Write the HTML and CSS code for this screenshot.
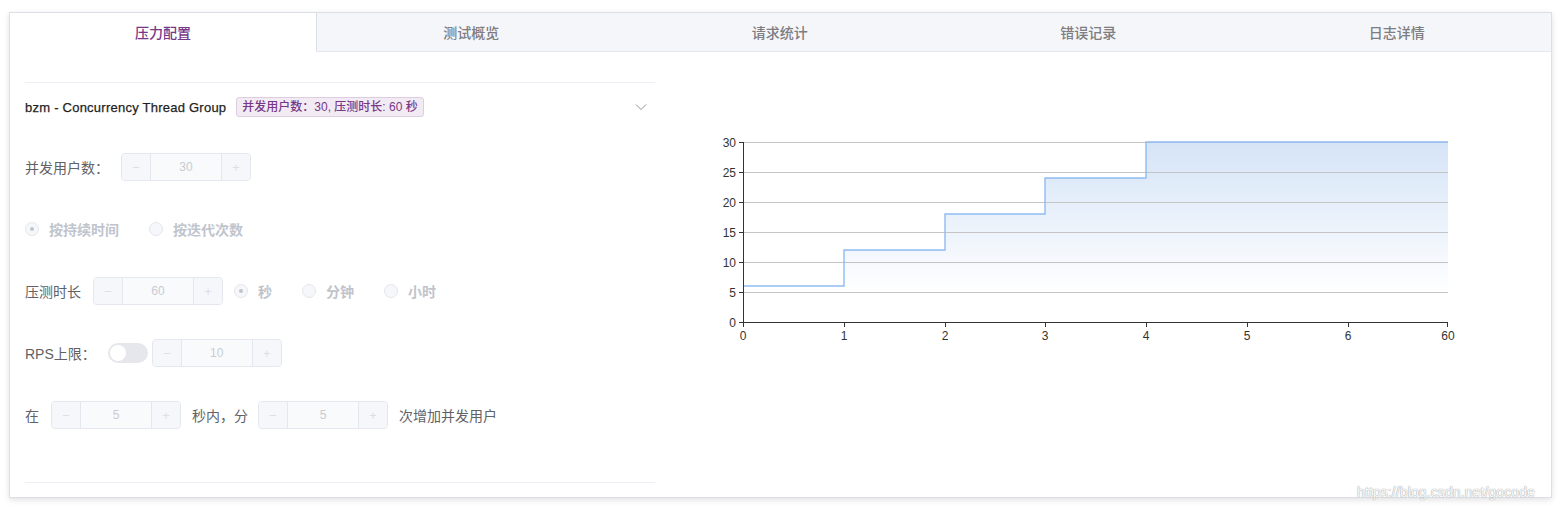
FILE: index.html
```html
<!DOCTYPE html>
<html lang="zh">
<head>
<meta charset="utf-8">
<title>压力配置</title>
<link rel="stylesheet" href="styles.css">
</head>
<body>
<div class="page">
  <div class="card">
    <div class="tabs">
      <div class="tab active">压力配置</div>
      <div class="tab">测试概览</div>
      <div class="tab">请求统计</div>
      <div class="tab">错误记录</div>
      <div class="tab">日志详情</div>
    </div>
    <div class="content">
      <div class="left">
        <div class="collapse">
          <div class="collapse-header">
            <span class="group-name">bzm - Concurrency Thread Group</span>
            <span class="tag">并发用户数：30, 压测时长: 60 秒</span>
            <span class="spacer"></span>
            <svg class="chevron" width="12" height="12" viewBox="0 0 12 12"><path d="M1 3.5 L6 8.5 L11 3.5" fill="none" stroke="#909399" stroke-width="1"/></svg>
          </div>
          <div class="collapse-body">
            <div class="row">
              <span class="label">并发用户数：</span>
              <div class="num"><span class="btn">−</span><span class="val">30</span><span class="btn plus">+</span></div>
            </div>
            <div class="row">
              <label class="radio checked"><span class="circle"></span><span class="rtext">按持续时间</span></label>
              <label class="radio"><span class="circle"></span><span class="rtext">按迭代次数</span></label>
            </div>
            <div class="row">
              <span class="label">压测时长</span>
              <div class="num gap-r"><span class="btn">−</span><span class="val">60</span><span class="btn plus">+</span></div>
              <label class="radio checked"><span class="circle"></span><span class="rtext">秒</span></label>
              <label class="radio"><span class="circle"></span><span class="rtext">分钟</span></label>
              <label class="radio"><span class="circle"></span><span class="rtext">小时</span></label>
            </div>
            <div class="row">
              <span class="label">RPS上限：</span>
              <span class="switch"><span class="knob"></span></span>
              <div class="num"><span class="btn">−</span><span class="val">10</span><span class="btn plus">+</span></div>
            </div>
            <div class="row">
              <span class="label">在</span>
              <div class="num gap-r"><span class="btn">−</span><span class="val">5</span><span class="btn plus">+</span></div>
              <span class="label mid">秒内，分</span>
              <div class="num gap-r"><span class="btn">−</span><span class="val">5</span><span class="btn plus">+</span></div>
              <span class="label">次增加并发用户</span>
            </div>
          </div>
        </div>
      </div>
      <div class="right">
        <svg class="chart" width="896" height="420" viewBox="0 0 896 420">
          <defs>
            <linearGradient id="fillg" x1="0" y1="90" x2="0" y2="270" gradientUnits="userSpaceOnUse">
              <stop offset="0" stop-color="#d5e4f7"/>
              <stop offset="0.85" stop-color="#ffffff"/>
            </linearGradient>
          </defs>
          <path d="M88 234 H189 V198 H290 V162 H390 V126 H491 V90 H793 V270 H88 Z" fill="url(#fillg)"/>
          <g stroke="#c4c4c4" stroke-width="1">
            <line x1="88" y1="90.5" x2="793" y2="90.5"/>
            <line x1="88" y1="120.5" x2="793" y2="120.5"/>
            <line x1="88" y1="150.5" x2="793" y2="150.5"/>
            <line x1="88" y1="180.5" x2="793" y2="180.5"/>
            <line x1="88" y1="210.5" x2="793" y2="210.5"/>
            <line x1="88" y1="240.5" x2="793" y2="240.5"/>
          </g>
          <path d="M88 234 H189 V198 H290 V162 H390 V126 H491 V90 H793" fill="none" stroke="#8ebcf2" stroke-width="1.4"/>
          <g stroke="#333" stroke-width="1">
            <line x1="88.5" y1="90" x2="88.5" y2="270"/>
            <line x1="88" y1="270.5" x2="793" y2="270.5"/>
            <line x1="84" y1="90.5" x2="88" y2="90.5"/>
            <line x1="84" y1="120.5" x2="88" y2="120.5"/>
            <line x1="84" y1="150.5" x2="88" y2="150.5"/>
            <line x1="84" y1="180.5" x2="88" y2="180.5"/>
            <line x1="84" y1="210.5" x2="88" y2="210.5"/>
            <line x1="84" y1="240.5" x2="88" y2="240.5"/>
            <line x1="84" y1="270.5" x2="88" y2="270.5"/>
            <line x1="88.5" y1="270" x2="88.5" y2="275"/>
            <line x1="189.5" y1="270" x2="189.5" y2="275"/>
            <line x1="290.5" y1="270" x2="290.5" y2="275"/>
            <line x1="390.5" y1="270" x2="390.5" y2="275"/>
            <line x1="491.5" y1="270" x2="491.5" y2="275"/>
            <line x1="592.5" y1="270" x2="592.5" y2="275"/>
            <line x1="693.5" y1="270" x2="693.5" y2="275"/>
            <line x1="792.5" y1="270" x2="792.5" y2="275"/>
          </g>
          <g class="ylab" text-anchor="end">
            <text x="81" y="94.5">30</text>
            <text x="81" y="124.5">25</text>
            <text x="81" y="154.5">20</text>
            <text x="81" y="184.5">15</text>
            <text x="81" y="214.5">10</text>
            <text x="81" y="244.5">5</text>
            <text x="81" y="274.5">0</text>
          </g>
          <g class="xlab" text-anchor="middle">
            <text x="88" y="288">0</text>
            <text x="189" y="288">1</text>
            <text x="290" y="288">2</text>
            <text x="390" y="288">3</text>
            <text x="491" y="288">4</text>
            <text x="592" y="288">5</text>
            <text x="693" y="288">6</text>
            <text x="793" y="288">60</text>
          </g>
        </svg>
      </div>
    </div>
  </div>
  <div class="watermark">https://blog.csdn.net/gocode</div>
</div>
</body>
</html>
```
FILE: styles.css
```css
* { box-sizing: border-box; }
html, body { margin: 0; padding: 0; background: #fff; }
body {
  font-family: "Liberation Sans", "Noto Sans CJK SC", sans-serif;
  color: #606266;
  font-size: 14px;
}
.page {
  position: relative;
  width: 1565px;
  height: 511px;
  padding: 12px 0 0 9px;
}
.card {
  width: 1543px;
  height: 486px;
  border: 1px solid #dcdfe6;
  box-shadow: 0 2px 6px rgba(0, 0, 0, 0.12);
  background: #fff;
}
.tabs {
  display: flex;
  height: 39px;
  background: #f5f6f9;
}
.tab {
  flex: 1;
  display: flex;
  align-items: center;
  justify-content: center;
  font-size: 14px;
  font-weight: 500;
  color: #7d7d82;
  border-bottom: 1px solid #e4e7ed;
}
.tab.active {
  background: #fff;
  color: #783887;
  border-bottom-color: #fff;
  border-right: 1px solid #dcdfe6;
  flex: 0 0 307px;
}
.content {
  display: flex;
  padding-left: 15px;
}
.left {
  width: 630px;
  padding-top: 30px;
}
.collapse {
  border-top: 1px solid #ebeef5;
  border-bottom: 1px solid #ebeef5;
}
.collapse-header {
  display: flex;
  align-items: center;
  height: 48px;
}
.group-name {
  font-size: 13px;
  font-weight: normal;
  color: #1f1f22;
  -webkit-text-stroke: 0.25px #1f1f22;
  letter-spacing: 0.24px;
}
.tag {
  margin-left: 10px;
  height: 20px;
  line-height: 18px;
  padding: 0 5px;
  font-size: 12px;
  color: #783887;
  background: #f2ebf3;
  border: 1px solid #dccde1;
  border-radius: 3px;
  font-weight: 500;
}
.spacer { flex: 1; }
.chevron { margin-right: 8px; }
.collapse-body {
  height: 351px;
  padding-top: 22px;
  display: flex;
  flex-direction: column;
  gap: 34px;
}
.row {
  display: flex;
  align-items: center;
  height: 28px;
}
.label {
  margin-right: 12px;
  font-size: 14px;
  color: #606266;
  white-space: nowrap;
}
.label.mid { margin-right: 10px; }
.num {
  display: flex;
  width: 130px;
  height: 28px;
  border: 1px solid #e4e7ed;
  border-radius: 4px;
  background: #f7f8fa;
  overflow: hidden;
}
.num.gap-r { margin-right: 11px; }
.num .btn {
  width: 29px;
  display: flex;
  align-items: center;
  justify-content: center;
  background: #f5f7fa;
  color: #dcdfe6;
  font-size: 13px;
  border-right: 1px solid #e4e7ed;
}
.num .btn.plus {
  border-right: 0;
  border-left: 1px solid #e4e7ed;
}
.num .val {
  flex: 1;
  display: flex;
  align-items: center;
  justify-content: center;
  color: #c8ccd3;
  font-size: 12px;
  background: #f9fafb;
}
.radio {
  display: flex;
  align-items: center;
  margin-right: 30px;
  font-size: 14px;
  font-weight: 600;
  color: #c0c4cc;
}
.radio .circle {
  width: 14px;
  height: 14px;
  border: 1px solid #e4e7ed;
  border-radius: 50%;
  background: #f5f7fa;
  margin-right: 10px;
  position: relative;
}
.radio.checked .circle::after {
  content: "";
  position: absolute;
  left: 4px;
  top: 4px;
  width: 4px;
  height: 4px;
  border-radius: 50%;
  background: #c0c4cc;
}
.switch {
  width: 40px;
  height: 20px;
  border-radius: 10px;
  background: #e6e7ec;
  margin-right: 4px;
  display: flex;
  align-items: center;
  padding-left: 2px;
}
.switch .knob {
  width: 16px;
  height: 16px;
  border-radius: 50%;
  background: #fff;
}
.right {
  flex: 1;
}
.chart { display: block; }
.chart text {
  font-family: "Liberation Sans", sans-serif;
  font-size: 12px;
  fill: #333;
}
.watermark {
  position: absolute;
  left: 1357px;
  top: 484px;
  font-size: 14px;
  color: rgba(255, 255, 255, 0.95);
  text-shadow: 0 0 1px #a0a0a0, 0 0 1px #b0b0b0;
  letter-spacing: 0.1px;
}
```
